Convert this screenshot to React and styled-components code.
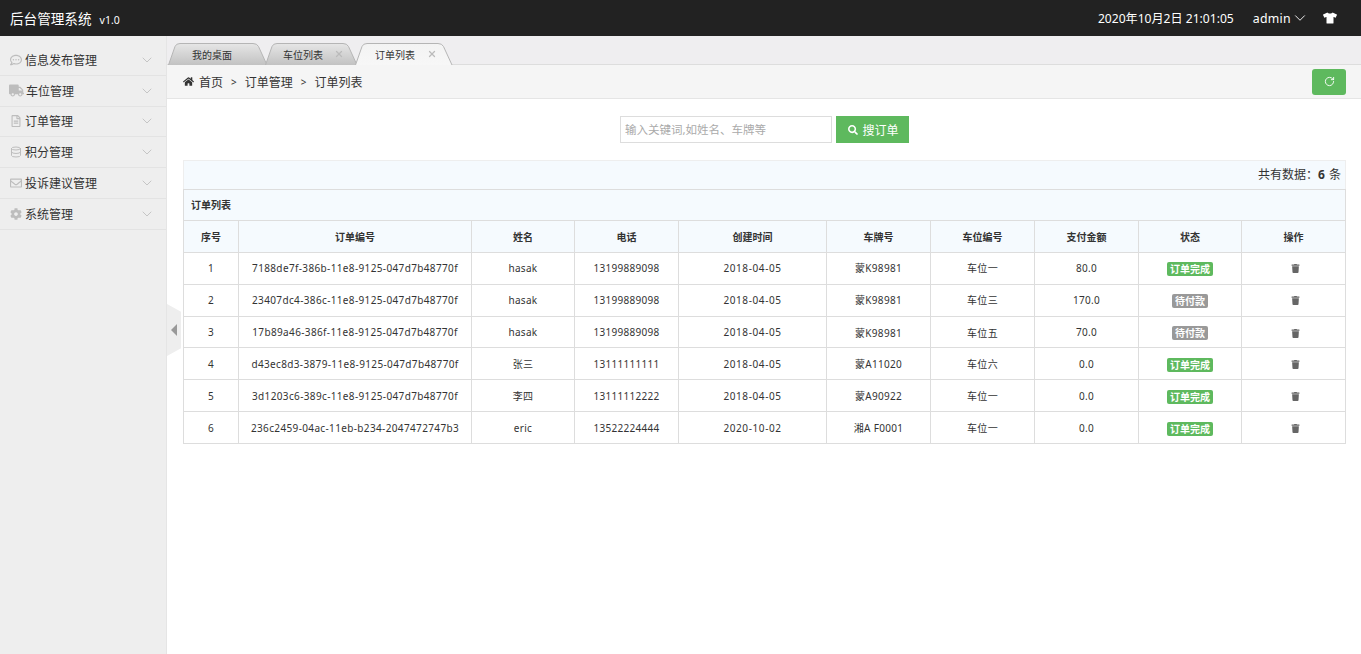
import React from 'react';
import styled, { createGlobalStyle } from 'styled-components';
import { FaHome, FaSearch, FaTrash, FaTshirt, FaTruck, FaRegCommentDots, FaRegEnvelope, FaCog, FaRegFileAlt } from 'react-icons/fa';
import { ChevronDown, Database, RotateCw, X } from 'lucide-react';

const FONT = `"Noto Sans", "Noto Sans CJK SC", sans-serif`;

const GlobalStyle = createGlobalStyle`
  html, body { margin: 0; padding: 0; background: #fff; }
  body { font-family: ${FONT}; font-size: 12px; color: #333; overflow: hidden; }
  * { box-sizing: border-box; }
`;

const Page = styled.div`
  height: 654px;
  display: flex;
  flex-direction: column;
`;

const Header = styled.header`
  height: 36px;
  flex: none;
  background: #222;
  color: #fff;
  display: flex;
  align-items: center;
  justify-content: space-between;
  padding: 0 24px 0 10px;
`;

const Logo = styled.div`
  font-size: 13.6px;
  display: flex;
  align-items: baseline;
  gap: 8px;
  small { font-size: 10.5px; }
`;

const HeaderRight = styled.div`
  display: flex;
  align-items: center;
  font-size: 12px;
`;

const Clock = styled.span`
  margin-right: 19px;
  font-size: 12.1px;
`;

const User = styled.span`
  display: flex;
  align-items: center;
  margin-right: 14px;
  font-size: 12.3px;
  letter-spacing: 0.3px;
`;

const Body = styled.div`
  flex: 1;
  display: flex;
  min-height: 0;
  position: relative;
`;

const Sidebar = styled.aside`
  width: 167px;
  flex: none;
  background: #eee;
  border-right: 1px solid #e5e5e5;
  padding-top: 9px;
`;

const MenuItem = styled.div`
  height: 30.8px;
  display: flex;
  align-items: center;
  padding: 0 11px 0 9px;
  border-bottom: 1px solid #e3e3e3;
  font-size: 12px;
  color: #333;
  white-space: nowrap;
`;

const MenuIcon = styled.span`
  width: ${p => (p.$wide ? 17 : 16)}px;
  display: flex;
  justify-content: ${p => (p.$wide ? 'flex-start' : 'center')};
  padding-right: ${p => (p.$wide ? 0 : 3)}px;
  color: #bdbdbd;
  font-size: ${p => (p.$wide ? 15 : 12)}px;
`;

const MenuLabel = styled.span`
  flex: 1;
`;

const MenuArrow = styled(ChevronDown)`
  color: #b5b5b5;
`;

const Toggle = styled.div`
  position: absolute;
  left: 167px;
  top: 268px;
  width: 14px;
  height: 52px;
  background: #eee;
  clip-path: polygon(0 0, 100% 15%, 100% 85%, 0 100%);
  display: flex;
  align-items: center;
  justify-content: center;
  &::before {
    content: '';
    border-style: solid;
    border-width: 6px 6px 6px 0;
    border-color: transparent #999 transparent transparent;
  }
`;

const Main = styled.main`
  flex: 1;
  min-width: 0;
  display: flex;
  flex-direction: column;
`;

const TabBar = styled.div`
  height: 29px;
  flex: none;
  background: #efeef0;
  border-bottom: 1px solid #ddd;
  display: flex;
  align-items: flex-end;
  padding-left: 1px;
`;

const TabItem = styled.div`
  position: relative;
  width: ${p => p.$w}px;
  height: 22px;
  margin-right: -3px;
  margin-bottom: -1px;
  z-index: ${p => (p.$active ? 2 : 1)};
  font-size: 10px;
  color: #333;
  display: flex;
  align-items: center;
  padding-left: ${p => p.$pad}px;
  svg.shape {
    position: absolute;
    left: 0;
    top: 0;
  }
  span {
    position: relative;
  }
  .close {
    position: absolute;
    left: ${p => p.$closeX}px;
    color: #bbb;
  }
`;

function Tab({ w, active, label, closeX, pad, id }) {
  const d = `M0.5 22 L7 3.5 Q8.2 0.5 12 0.5 L${w - 15} 0.5 Q${w - 11} 0.5 ${w - 9.5} 3.5 L${w - 1} 22`;
  return (
    <TabItem $w={w} $active={active} $pad={pad} $closeX={closeX}>
      <svg className="shape" width={w} height={22}>
        <defs>
          <linearGradient id={id} x1="0" y1="0" x2="0" y2="1">
            <stop offset="0" stopColor={active ? '#f3f3f3' : '#e6e6e6'} />
            <stop offset="1" stopColor={active ? '#f7f7f7' : '#c2c2c2'} />
          </linearGradient>
        </defs>
        <path d={d} fill={`url(#${id})`} stroke="#b5b5b5" />
      </svg>
      <span>{label}</span>
      {closeX && <X className="close" size={10} strokeWidth={3} />}
    </TabItem>
  );
}

const CrumbBar = styled.div`
  height: 34px;
  flex: none;
  background: #f5f5f5;
  border-bottom: 1px solid #e5e5e5;
  display: flex;
  align-items: center;
  justify-content: space-between;
  padding: 0 15px 0 16px;
  font-size: 12px;
`;

const Crumbs = styled.nav`
  display: flex;
  align-items: center;
  color: #333;
  svg { font-size: 11px; margin-right: 5px; }
  i { font-style: normal; margin: 0 8px; font-size: 10px; }
`;

const RefreshButton = styled.button`
  width: 34px;
  height: 26px;
  padding: 0;
  border: 0;
  border-radius: 3px;
  background: #5eb95e;
  color: #fff;
  display: flex;
  align-items: center;
  justify-content: center;
`;

const Content = styled.div`
  padding: 17px 15px 0 16px;
`;

const SearchRow = styled.form`
  display: flex;
  justify-content: center;
  gap: 4px;
  margin-bottom: 17px;
`;

const SearchInput = styled.input`
  width: 212px;
  height: 27px;
  padding: 0 4px;
  border: 1px solid #ddd;
  font-family: ${FONT};
  font-size: 11.5px;
  outline: none;
  &::placeholder { color: #aaa; }
`;

const SearchButton = styled.button`
  width: 73px;
  height: 27px;
  border: 0;
  padding: 0 0 0 2px;
  background: #5eb95e;
  color: #fff;
  font-family: ${FONT};
  font-size: 12px;
  display: flex;
  align-items: center;
  justify-content: center;
  gap: 4px;
`;

const Stats = styled.div`
  height: 29px;
  background: #f5fafe;
  border: 1px solid #eee;
  border-bottom: 0;
  display: flex;
  align-items: center;
  justify-content: flex-end;
  padding: 0 4px 2px 0;
  font-size: 12px;
  strong { margin: 0 4px 0 0; }
`;

const Table = styled.table`
  width: 1162px;
  table-layout: fixed;
  border-collapse: collapse;
  font-size: 10px;
  color: #333;
`;

const Col = styled.col`
  width: ${p => p.$w}px;
`;

const TitleCell = styled.th`
  height: 31px;
  padding: 0 0 1px 7px;
  text-align: left;
  background: #f5fafe;
  border: 1px solid #ddd;
  font-weight: 700;
`;

const HeadCell = styled.th`
  height: 32px;
  padding: 0;
  text-align: center;
  background: #f5fafe;
  border: 1px solid #ddd;
  font-weight: 700;
`;

const Cell = styled.td`
  height: 32px;
  padding: 0;
  text-align: center;
  border: 1px solid #ddd;
  white-space: nowrap;
  letter-spacing: ${p => p.$spacing || 0.3}px;
  tr:nth-child(-n + 2) > & {
    padding-bottom: 2px;
  }
  tr:nth-child(3) > & {
    height: 31px;
  }
`;

const Badge = styled.span`
  display: inline-block;
  margin-top: 2px;
  padding: 0 3px;
  height: 14px;
  line-height: 14px;
  border-radius: 2px;
  background: ${p => (p.$done ? '#5eb95e' : '#999')};
  color: #fff;
  font-weight: 700;
  font-size: 10px;
  letter-spacing: 0;
  vertical-align: middle;
`;

const TrashIcon = styled(FaTrash)`
  font-size: 9px;
  color: #666;
  margin: 0 0 0 3px;
  vertical-align: middle;
`;

const menus = [
  ['信息发布管理', <FaRegCommentDots />],
  ['车位管理', <FaTruck />, true],
  ['订单管理', <FaRegFileAlt />],
  ['积分管理', <Database size={12} />],
  ['投诉建议管理', <FaRegEnvelope />],
  ['系统管理', <FaCog />],
];

const widths = [55, 233, 103, 104, 148, 104, 104, 104, 103, 104];
const heads = ['序号', '订单编号', '姓名', '电话', '创建时间', '车牌号', '车位编号', '支付金额', '状态', '操作'];

const orders = [
  ['7188de7f-386b-11e8-9125-047d7b48770f', 'hasak', '13199889098', '2018-04-05', '蒙K98981', '车位一', '80.0', true],
  ['23407dc4-386c-11e8-9125-047d7b48770f', 'hasak', '13199889098', '2018-04-05', '蒙K98981', '车位三', '170.0', false],
  ['17b89a46-386f-11e8-9125-047d7b48770f', 'hasak', '13199889098', '2018-04-05', '蒙K98981', '车位五', '70.0', false],
  ['d43ec8d3-3879-11e8-9125-047d7b48770f', '张三', '13111111111', '2018-04-05', '蒙A11020', '车位六', '0.0', true],
  ['3d1203c6-389c-11e8-9125-047d7b48770f', '李四', '13111112222', '2018-04-05', '蒙A90922', '车位一', '0.0', true],
  ['236c2459-04ac-11eb-b234-2047472747b3', 'eric', '13522224444', '2020-10-02', '湘A F0001', '车位一', '0.0', true],
];

export default function App() {
  return (
    <Page>
      <GlobalStyle />
      <Header>
        <Logo>
          后台管理系统 <small>v1.0</small>
        </Logo>
        <HeaderRight>
          <Clock>2020年10月2日 21:01:05</Clock>
          <User>
            admin <ChevronDown size={18} strokeWidth={1.2} />
          </User>
          <FaTshirt size={14} />
        </HeaderRight>
      </Header>
      <Body>
        <Sidebar>
          {menus.map(([label, icon, wide]) => (
            <MenuItem key={label}>
              <MenuIcon $wide={wide}>{icon}</MenuIcon>
              <MenuLabel>{label}</MenuLabel>
              <MenuArrow size={16} strokeWidth={1.1} />
            </MenuItem>
          ))}
        </Sidebar>
        <Toggle />
        <Main>
          <TabBar>
            <Tab id="t1" w={100} pad={24} label="我的桌面" />
            <Tab id="t2" w={93} pad={18} closeX={69} label="车位列表" />
            <Tab id="t3" w={98} pad={20} closeX={72} label="订单列表" active />
          </TabBar>
          <CrumbBar>
            <Crumbs>
              <FaHome />
              首页<i>&gt;</i>订单管理<i>&gt;</i>订单列表
            </Crumbs>
            <RefreshButton type="button">
              <RotateCw size={11} />
            </RefreshButton>
          </CrumbBar>
          <Content>
            <SearchRow>
              <SearchInput placeholder="输入关键词,如姓名、车牌等" />
              <SearchButton type="button">
                <FaSearch size={10} />
                搜订单
              </SearchButton>
            </SearchRow>
            <Stats>
              共有数据：<strong>6</strong>条
            </Stats>
            <Table>
              <colgroup>
                {widths.map((w, i) => (
                  <Col key={i} $w={w} />
                ))}
              </colgroup>
              <thead>
                <tr>
                  <TitleCell colSpan={10}>订单列表</TitleCell>
                </tr>
                <tr>
                  {heads.map(h => (
                    <HeadCell key={h}>{h}</HeadCell>
                  ))}
                </tr>
              </thead>
              <tbody>
                {orders.map((o, i) => (
                  <tr key={o[0]}>
                    <Cell>{i + 1}</Cell>
                    {o.slice(0, 7).map((v, j) => (
                      <Cell key={j} $spacing={j === 0 ? 0.36 : j === 3 ? 0.6 : 0.3}>
                        {v}
                      </Cell>
                    ))}
                    <Cell>
                      <Badge $done={o[7]}>{o[7] ? '订单完成' : '待付款'}</Badge>
                    </Cell>
                    <Cell>
                      <TrashIcon />
                    </Cell>
                  </tr>
                ))}
              </tbody>
            </Table>
          </Content>
        </Main>
      </Body>
    </Page>
  );
}
